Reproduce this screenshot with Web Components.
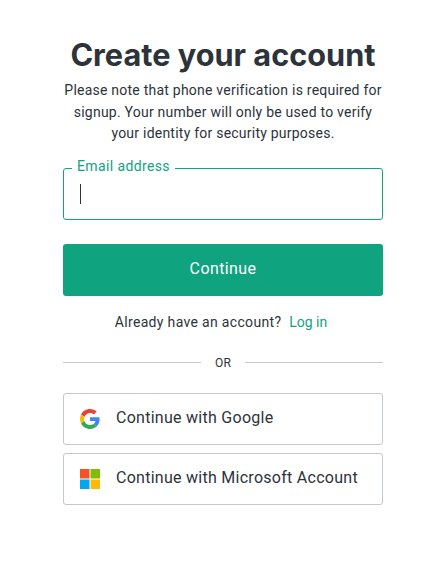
<!DOCTYPE html>
<html>
<head>
<meta charset="utf-8">
<title>Create your account</title>
<style>
  html, body { margin: 0; background: #fff; }
  body { font-family: Roboto, "Liberation Sans", sans-serif; color: #2d333a; }
</style>
</head>
<body>
<signup-page>
  <signup-header heading="Create your account">
    Please note that phone verification is required for signup. Your number will only be used to verify your identity for security purposes.
  </signup-header>
  <email-field label="Email address"></email-field>
  <primary-button>Continue</primary-button>
  <login-hint></login-hint>
  <or-divider></or-divider>
  <social-button>
    <svg slot="icon" width="20" height="20" viewBox="0 0 48 48">
      <path fill="#EA4335" d="M24 9.500c3.500 0 6.700 1.200 9.200 3.600l6.900-6.900C35.900 2.400 30.500 0 24 0 14.600 0 6.500 5.400 2.600 13.200l8 6.200C12.500 13.700 17.800 9.500 24 9.500z"/>
      <path fill="#4285F4" d="M47 24.500c0-1.600-.2-3.200-.4-4.500H24v9h12.900c-.6 3-2.200 5.500-4.700 7.200l7.700 6C44.400 37.600 47 31.600 47 24.500z"/>
      <path fill="#FBBC05" d="M10.500 28.600c-.5-1.400-.8-3-.8-4.600s.3-3.200.8-4.600l-8-6.200C.9 16.500 0 20.100 0 24s.9 7.500 2.600 10.800l7.900-6.200z"/>
      <path fill="#34A853" d="M24 48c6.500 0 11.900-2.100 15.900-5.800l-7.700-6c-2.100 1.400-4.900 2.300-8.200 2.300-6.200 0-11.500-4.200-13.400-9.900l-8 6.200C6.500 42.600 14.600 48 24 48z"/>
    </svg>
    Continue with Google
  </social-button>
  <social-button>
    <svg slot="icon" width="20" height="20" viewBox="0 0 20 20">
      <rect width="9.500" height="9.500" fill="#F35325"/>
      <rect x="10.500" width="9.500" height="9.500" fill="#81BC06"/>
      <rect y="10.500" width="9.500" height="9.500" fill="#05A6F0"/>
      <rect x="10.500" y="10.500" width="9.500" height="9.500" fill="#FFBA08"/>
    </svg>
    Continue with Microsoft Account
  </social-button>
</signup-page>

<script>
const makeTemplate = (html) => {
  const t = document.createElement('template')
  t.innerHTML = html
  return t
}

class BaseElement extends HTMLElement {
  constructor (...props) {
    super(...props)
    this.attachShadow({mode: 'open'})
    this.shadowRoot.appendChild(this.constructor.template.content.cloneNode(true))
  }
}

class SignupPage extends BaseElement {
  static get template () {
    return makeTemplate(`
      <style>
        :host { display: block; width: 440px; height: 571px; box-sizing: border-box; padding: 32px 0 0 63px; }
        .column { width: 320px; display: flex; flex-direction: column; }
      </style>
      <div class='column'><slot></slot></div>
    `)
  }
}

class SignupHeader extends BaseElement {
  static get template () {
    return makeTemplate(`
      <style>
        :host { display: block; text-align: center; }
        h1 { margin: 0 0 2px; font: 650 30.7px/46px Inter, sans-serif; color: #2d333a; }
        p { margin: 0; font: 400 14px/21.5px Roboto, sans-serif; letter-spacing: .23px; color: #2d333a; }
      </style>
      <h1></h1>
      <p><slot></slot></p>
    `)
  }
  connectedCallback () {
    this.shadowRoot.querySelector('h1').textContent = this.getAttribute('heading')
  }
}

class EmailField extends BaseElement {
  static get template () {
    return makeTemplate(`
      <style>
        :host { display: block; position: relative; margin-top: 23px; }
        .box { height: 52px; box-sizing: border-box; border: 1px solid #10a37f; border-radius: 3px; display: flex; align-items: center; padding-left: 16px; }
        .caret { width: 1px; height: 20px; background: #2d333a; }
        label { position: absolute; left: 9px; top: -10px; padding: 0 5px; background: #fff; font: 400 14px/16px Roboto, sans-serif; letter-spacing: .38px; color: #10a37f; }
      </style>
      <div class='box'><div class='caret'></div></div>
      <label></label>
    `)
  }
  connectedCallback () {
    this.shadowRoot.querySelector('label').textContent = this.getAttribute('label')
  }
}

class PrimaryButton extends BaseElement {
  static get template () {
    return makeTemplate(`
      <style>
        :host { display: block; margin-top: 24px; }
        button { display: block; width: 100%; height: 52px; padding: 0 0 2px; border: 0; border-radius: 3px; background: #10a37f; color: #fff; font: 400 16px Roboto, sans-serif; letter-spacing: .4px; }
      </style>
      <button><slot></slot></button>
    `)
  }
}

class LoginHint extends BaseElement {
  static get template () {
    return makeTemplate(`
      <style>
        :host { display: block; margin-top: 16px; padding-right: 4px; text-align: center; font: 400 14px/20px Roboto, sans-serif; letter-spacing: .33px; color: #2d333a; }
        a { color: #10a37f; text-decoration: none; margin-left: 4px; letter-spacing: 0; }
      </style>
      Already have an account? <a href='#'>Log in</a>
    `)
  }
}

class OrDivider extends BaseElement {
  static get template () {
    return makeTemplate(`
      <style>
        :host { display: flex; align-items: center; margin-top: 23px; font: 400 12px/16px Roboto, sans-serif; letter-spacing: .3px; color: #2d333a; }
        i { flex: 1; height: 1px; background: #c2c8d0; }
        span { padding: 0 14px; }
      </style>
      <i></i><span>OR</span><i></i>
    `)
  }
}

class SocialButton extends BaseElement {
  static get template () {
    return makeTemplate(`
      <style>
        :host { display: flex; align-items: center; height: 52px; box-sizing: border-box; margin-top: 8px; padding: 0 0 0 16px; gap: 16px; border: 1px solid #c2c8d0; border-radius: 3px; font: 400 16px Roboto, sans-serif; letter-spacing: .27px; color: #2d333a; }
        :host(:first-of-type) { margin-top: 22px; }
        ::slotted(svg) { display: block; }
        span { padding-bottom: 2px; }
      </style>
      <slot name='icon'></slot>
      <span><slot></slot></span>
    `)
  }
}

customElements.define('signup-page', SignupPage)
customElements.define('signup-header', SignupHeader)
customElements.define('email-field', EmailField)
customElements.define('primary-button', PrimaryButton)
customElements.define('login-hint', LoginHint)
customElements.define('or-divider', OrDivider)
customElements.define('social-button', SocialButton)
</script>
</body>
</html>
